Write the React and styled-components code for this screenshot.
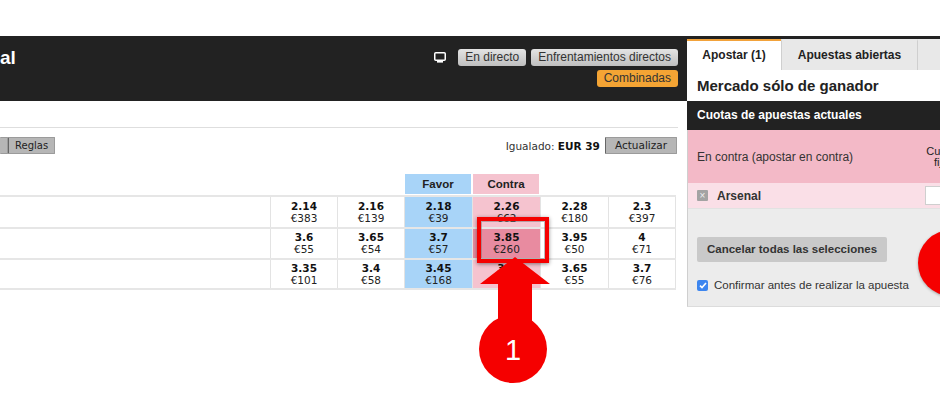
import React from 'react'
import styled, { createGlobalStyle } from 'styled-components'

const GlobalStyle = createGlobalStyle`
  html, body {
    margin: 0;
    padding: 0;
    background: #fff;
    overflow: hidden;
  }
  body {
    font-family: "Liberation Sans", Arial, sans-serif;
    color: #222;
  }
`

/* * * * * * * * * * * * * * * * * *
 *
 *  Page frame
 *
 * * * * * * * * * * * * * * * * * */
const Page = styled.div`
  display: flex;
  align-items: flex-start;
  width: 940px;
  height: 400px;
  box-sizing: border-box;
  padding-top: 36px;
  overflow: hidden;
`
const Main = styled.div`
  position: relative;
  flex-shrink: 0;
  width: 687px;
`

/* * * * * * * * * * * * * * * * * *
 *
 *  Market header
 *
 * * * * * * * * * * * * * * * * * */
const Header = styled.div`
  display: flex;
  justify-content: space-between;
  align-items: flex-start;
  height: 65px;
  box-sizing: border-box;
  padding: 13px 9px 0 0;
  background: #222;
`
const Title = styled.h1`
  margin: 0;
  font-size: 19px;
  line-height: 17px;
  font-weight: 700;
  color: #fff;
`
const HeaderActions = styled.div`
  display: flex;
  flex-direction: column;
  align-items: flex-end;
  gap: 4px;
`
const HeaderRow = styled.div`
  display: flex;
  align-items: center;
  gap: 5px;
`
const HeaderButton = styled.button`
  height: 17px;
  padding: 0 7px;
  border: 0;
  border-radius: 3px;
  font-family: "Liberation Sans", Arial, sans-serif;
  font-size: 12px;
  line-height: 17px;
  color: #333;
  background: ${p => p.accent
    ? '#f4a434'
    : 'linear-gradient(#e4e4e4, #bfbfbf)'};
`
const TvIcon = styled.svg`
  width: 12px;
  height: 11px;
  margin-right: 7px;
`

/* * * * * * * * * * * * * * * * * *
 *
 *  Toolbar
 *
 * * * * * * * * * * * * * * * * * */
const Divider = styled.div`
  height: 1px;
  margin: 26px 9px 0 0;
  background: #dedede;
`
const Toolbar = styled.div`
  display: flex;
  justify-content: space-between;
  align-items: center;
  height: 17px;
  margin: 9px 10px 0 0;
  font-family: "DejaVu Sans", Verdana, sans-serif;
  font-size: 10.5px;
  color: #333;
`
const ButtonGroup = styled.div`
  display: flex;
  height: 17px;
  font-size: 10px;
`
const ToolButton = styled.div`
  box-sizing: border-box;
  height: 17px;
  min-width: ${p => p.stub ? '8px' : 'auto'};
  padding: 0 ${p => p.stub ? 0 : p.wide ? 9 : 6}px;
  border: 1px solid #9b9b9b;
  border-left: ${p => p.stub ? 0 : '1px solid #666'};
  border-radius: 1px;
  background: #b6b6b6;
  line-height: 15px;
  color: #222;
`
const Matched = styled.div`
  display: flex;
  align-items: center;
  gap: 5px;
  b {
    font-weight: 700;
    color: #111;
  }
`

/* * * * * * * * * * * * * * * * * *
 *
 *  Odds table
 *
 * * * * * * * * * * * * * * * * * */
const COLS = '270px 67px 67px 68px 68px 68px 68px'
const Table = styled.div`
  width: 676px;
  margin-top: 20px;
`
const HeadRow = styled.div`
  display: grid;
  grid-template-columns: ${COLS};
  height: 21px;
`
const HeadCell = styled.div`
  margin: 0 1px 1px 1px;
  background: ${p => p.side === 'back' ? '#a8d4f8' : p.side === 'lay' ? '#f5c3cf' : 'transparent'};
  font-size: 11.5px;
  font-weight: 700;
  line-height: 20px;
  text-align: center;
  color: #222;
`
const Row = styled.div`
  display: grid;
  grid-template-columns: ${COLS};
  height: 31.5px;
  box-sizing: border-box;
  border-top: 2px solid #e6e6e6;
  &:last-child {
    border-bottom: 2px solid #e6e6e6;
  }
`
const NameCell = styled.div``
const PriceCell = styled.div`
  display: flex;
  flex-direction: column;
  justify-content: center;
  align-items: center;
  border-left: 1px solid #e3e3e3;
  &:last-child {
    border-right: 1px solid #e3e3e3;
  }
  background: ${p => p.selected
    ? '#e88ba0'
    : p.side === 'back'
      ? '#a8d4f8'
      : p.side === 'lay'
        ? '#f5c3cf'
        : '#fff'};
  font-family: "DejaVu Sans", Verdana, sans-serif;
  color: #111;
  b {
    font-size: 10.5px;
    line-height: 12px;
    font-weight: 700;
  }
  span {
    font-size: 10.5px;
    line-height: 12px;
    color: #222;
  }
`

/* * * * * * * * * * * * * * * * * *
 *
 *  Annotations
 *
 * * * * * * * * * * * * * * * * * */
const Highlight = styled.div`
  position: absolute;
  left: 477px;
  top: 181px;
  width: 72px;
  height: 46px;
  box-sizing: border-box;
  border: 4px solid #f50000;
  box-shadow: 0 1px 4px rgba(0, 0, 0, 0.45), inset 0 0 0 1px rgba(120, 120, 120, 0.5);
`
const ArrowMark = styled.svg`
  position: absolute;
  left: 470px;
  top: 214px;
  width: 90px;
  height: 140px;
  overflow: visible;
`
const Bubble = styled.div`
  position: absolute;
  left: ${p => p.left}px;
  top: ${p => p.top}px;
  width: 66px;
  height: 66px;
  border-radius: 50%;
  background: #f50000;
  box-shadow: 0 1px 3px rgba(0, 0, 0, 0.3);
`

/* * * * * * * * * * * * * * * * * *
 *
 *  Bet slip
 *
 * * * * * * * * * * * * * * * * * */
const BetSlip = styled.div`
  position: relative;
  flex-shrink: 0;
  width: 290px;
  border-top: 3px solid #222;
`
const Tabs = styled.div`
  display: flex;
  height: 31px;
  background: #e8e8e8;
`
const Tab = styled.div`
  box-sizing: border-box;
  width: ${p => p.w}px;
  flex-shrink: 0;
  border-top: 2px solid ${p => p.active ? '#f2a23a' : '#e8e8e8'};
  border-left: ${p => p.active ? 0 : '1px solid #cfcfcf'};
  background: ${p => p.active ? '#fff' : '#e8e8e8'};
  font-size: 12px;
  font-weight: 700;
  line-height: 28px;
  text-align: center;
  color: #222;
`
const SlipTitle = styled.div`
  height: 31px;
  padding-left: 10px;
  font-size: 15px;
  font-weight: 700;
  line-height: 32px;
  color: #222;
`
const SectionBar = styled.div`
  height: 29px;
  padding-left: 10px;
  background: #222;
  font-size: 12px;
  font-weight: 700;
  line-height: 29px;
  color: #fff;
`
const SlipBody = styled.div`
  border-left: 1px solid #cfcfcf;
  border-bottom: 1px solid #dcdcdc;
`
const LayHeader = styled.div`
  display: flex;
  align-items: center;
  height: 53px;
  padding-left: 9px;
  background: #f3b9c7;
  font-size: 12px;
  color: #333;
`
const LayLabel = styled.div`
  width: 224px;
`
const OddsLabel = styled.div`
  width: 40px;
  font-size: 11px;
  line-height: 11px;
  text-align: center;
  color: #222;
`
const Selection = styled.div`
  display: flex;
  align-items: center;
  height: 25px;
  padding-left: 9px;
  border-bottom: 1px solid #e2e2e2;
  background: #fadfe7;
  font-size: 12px;
  font-weight: 700;
  color: #333;
`
const RemoveBox = styled.span`
  display: inline-flex;
  justify-content: center;
  align-items: center;
  width: 11px;
  height: 11px;
  margin-right: 9px;
  border-radius: 1px;
  background: #a3a3a3;
  color: #eee;
  font-size: 10px;
  font-weight: 400;
  line-height: 11px;
`
const StakeInput = styled.div`
  width: 50px;
  height: 17px;
  margin-left: auto;
  border: 1px solid #cfcfcf;
  background: #fff;
`
const SlipActions = styled.div`
  display: flex;
  flex-direction: column;
  align-items: flex-start;
  gap: 17px;
  height: 97px;
  box-sizing: border-box;
  padding: 28px 9px 0;
  background: #ececec;
`
const CancelButton = styled.div`
  height: 25px;
  padding: 0 10px;
  border-radius: 2px;
  background: #c9c9c9;
  font-size: 11.5px;
  font-weight: 700;
  line-height: 25px;
  color: #333;
`
const Confirm = styled.label`
  display: flex;
  align-items: center;
  gap: 6px;
  font-size: 11.5px;
  color: #333;
`
const Check = styled.span`
  display: inline-flex;
  justify-content: center;
  align-items: center;
  width: 11px;
  height: 11px;
  border-radius: 2px;
  background: #3d86ef;
`

const runners = [
  [['2.14', '€383'], ['2.16', '€139'], ['2.18', '€39'], ['2.26', '€62'], ['2.28', '€180'], ['2.3', '€397']],
  [['3.6', '€55'], ['3.65', '€54'], ['3.7', '€57'], ['3.85', '€260'], ['3.95', '€50'], ['4', '€71']],
  [['3.35', '€101'], ['3.4', '€58'], ['3.45', '€168'], ['3.5', '€42'], ['3.65', '€55'], ['3.7', '€76']]
]

const sideOf = i => (i === 2 ? 'back' : i === 3 ? 'lay' : null)

export default function App () {
  return (
    <>
      <GlobalStyle />
      <Page>
        <Main>
          <Header>
            <Title>al</Title>
            <HeaderActions>
              <HeaderRow>
                <TvIcon viewBox='0 0 12 11'>
                  <rect x='0.75' y='0.75' width='10.5' height='7.5' rx='1' fill='none' stroke='#fff' strokeWidth='1.5' />
                  <rect x='3' y='9' width='6' height='1.6' fill='#fff' />
                </TvIcon>
                <HeaderButton>En directo</HeaderButton>
                <HeaderButton>Enfrentamientos directos</HeaderButton>
              </HeaderRow>
              <HeaderRow>
                <HeaderButton accent>Combinadas</HeaderButton>
              </HeaderRow>
            </HeaderActions>
          </Header>

          <Divider />

          <Toolbar>
            <ButtonGroup>
              <ToolButton stub />
              <ToolButton>Reglas</ToolButton>
            </ButtonGroup>
            <Matched>
              <span>Igualado: <b>EUR 39</b></span>
              <ToolButton wide>Actualizar</ToolButton>
            </Matched>
          </Toolbar>

          <Table>
            <HeadRow>
              <div />
              <div />
              <div />
              <HeadCell side='back'>Favor</HeadCell>
              <HeadCell side='lay'>Contra</HeadCell>
              <div />
              <div />
            </HeadRow>
            {runners.map((prices, r) => (
              <Row key={r}>
                <NameCell />
                {prices.map(([odds, amount], i) => (
                  <PriceCell key={i} side={sideOf(i)} selected={r === 1 && i === 3}>
                    <b>{odds}</b>
                    <span>{amount}</span>
                  </PriceCell>
                ))}
              </Row>
            ))}
          </Table>

          <Highlight />
          <ArrowMark viewBox='0 0 90 140'>
            <polygon points='45,7 80,34 62,34 62,90 28,90 28,34 10,34' fill='#f50000' />
            <circle cx='43' cy='99' r='34' fill='#f50000' />
            <text x='43' y='110' textAnchor='middle' fill='#fff' fontSize='29' fontFamily='Liberation Sans, Arial, sans-serif'>1</text>
          </ArrowMark>
        </Main>

        <BetSlip>
          <Tabs>
            <Tab active w={94}>Apostar (1)</Tab>
            <Tab w={136}>Apuestas abiertas</Tab>
            <Tab w={60} />
          </Tabs>
          <SlipTitle>Mercado sólo de ganador</SlipTitle>
          <SectionBar>Cuotas de apuestas actuales</SectionBar>
          <SlipBody>
            <LayHeader>
              <LayLabel>En contra (apostar en contra)</LayLabel>
              <OddsLabel>Cuota<br />fija</OddsLabel>
            </LayHeader>
            <Selection>
              <RemoveBox>×</RemoveBox>
              Arsenal
              <StakeInput />
            </Selection>
            <SlipActions>
              <CancelButton>Cancelar todas las selecciones</CancelButton>
              <Confirm>
                <Check>
                  <svg width='8' height='7' viewBox='0 0 8 7'>
                    <path d='M1 3.6 L3 5.6 L7 1' fill='none' stroke='#fff' strokeWidth='1.6' />
                  </svg>
                </Check>
                Confirmar antes de realizar la apuesta
              </Confirm>
            </SlipActions>
          </SlipBody>
          <Bubble left={231} top={191} />
        </BetSlip>
      </Page>
    </>
  )
}
